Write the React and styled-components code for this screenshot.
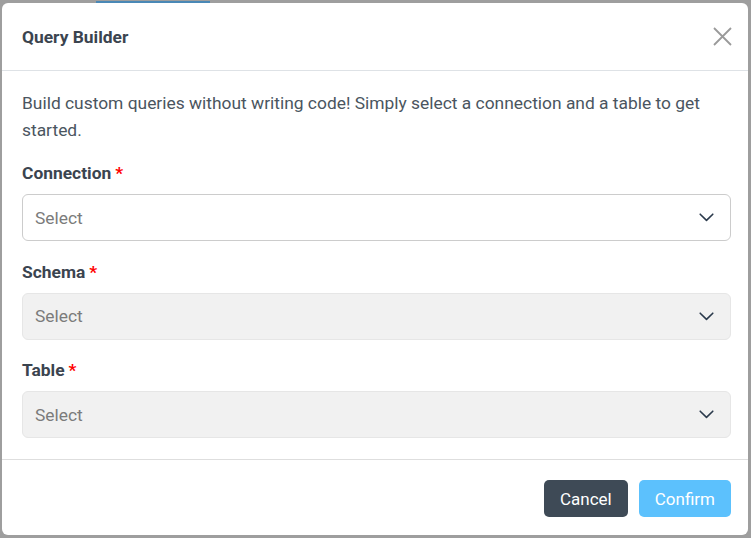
import React from "react";
import styled, { createGlobalStyle } from "styled-components";

const Global = createGlobalStyle`
  html, body { margin: 0; padding: 0; background: #9e9e9e; }
  body { font-family: Roboto, "Liberation Sans", sans-serif; }
  * { box-sizing: border-box; }
`;

const Backdrop = styled.div`
  width: 751px;
  height: 538px;
  padding-top: 1px;
  overflow: hidden;
`;

const Strip = styled.div`
  margin-left: 96px;
  width: 114px;
  height: 2px;
  background: #4a88b6;
`;

const Modal = styled.div`
  margin-left: 2px;
  width: 746px;
  height: 532px;
  background: #fff;
  border-radius: 6px;
  display: flex;
  flex-direction: column;
`;

const Header = styled.div`
  height: 68px;
  border-bottom: 1px solid #dee2e6;
  display: flex;
  align-items: center;
  justify-content: space-between;
  padding: 0 16px 0 20px;
`;

const Title = styled.h2`
  margin: 0;
  font-size: 17.4px;
  font-weight: 700;
  color: #3b444f;
`;

const Close = styled.button`
  border: 0;
  background: none;
  padding: 0;
  width: 19px;
  height: 19px;
  display: flex;
  cursor: pointer;
`;

const Body = styled.div`
  padding: 19px 17px 0 20px;
  flex: 1;
`;

const Desc = styled.p`
  margin: 0 0 17px;
  font-size: 17.4px;
  line-height: 27px;
  color: #4a5560;
`;

const Field = styled.div`
  margin-bottom: 18.5px;
`;

const Label = styled.label`
  display: block;
  font-size: 17.4px;
  font-weight: 700;
  line-height: 24px;
  color: #3b444f;
  margin-bottom: 9px;
`;

const Req = styled.span`
  color: #f00;
  margin-left: 4px;
`;

const Select = styled.div`
  height: 47px;
  border: 1px solid ${(p) => (p.disabled ? "#e6e6e6" : "#cccccc")};
  background: ${(p) => (p.disabled ? "#f1f1f1" : "#fff")};
  border-radius: 6px;
  display: flex;
  align-items: center;
  justify-content: space-between;
  padding: 0 16px 0 12px;
`;

const Placeholder = styled.span`
  font-size: 17.4px;
  color: #7b7b7b;
`;

const Footer = styled.div`
  border-top: 1px solid #dedede;
  height: 76px;
  display: flex;
  align-items: flex-start;
  justify-content: flex-end;
  gap: 11px;
  padding: 20px 17px 0 20px;
`;

const Button = styled.button`
  height: 37px;
  border: 0;
  border-radius: 5px;
  padding: 0 16px;
  font-family: Roboto, "Liberation Sans", sans-serif;
  font-size: 17px;
  color: #fff;
  background: ${(p) => (p.primary ? "#5cc1fd" : "#3e4a56")};
  cursor: pointer;
`;

const Chevron = () => (
  <svg width="15" height="9" viewBox="0 0 15 9" fill="none">
    <path d="M1.2 1.2L7.5 7.4l6.3-6.2" stroke="#2b3a4c" strokeWidth="1.6" strokeLinecap="round" strokeLinejoin="round" />
  </svg>
);

const fields = [
  { label: "Connection", disabled: false },
  { label: "Schema", disabled: true },
  { label: "Table", disabled: true },
];

export default function App() {
  return (
    <>
      <Global />
      <Backdrop>
        <Strip />
        <Modal>
          <Header>
            <Title>Query Builder</Title>
            <Close aria-label="Close">
              <svg width="19" height="19" viewBox="0 0 19 19">
                <path d="M1 1L18 18M18 1L1 18" stroke="#9a9a9a" strokeWidth="1.8" />
              </svg>
            </Close>
          </Header>
          <Body>
            <Desc>
              Build custom queries without writing code! Simply select a connection and a table to get started.
            </Desc>
            {fields.map((f) => (
              <Field key={f.label}>
                <Label>
                  {f.label}
                  <Req>*</Req>
                </Label>
                <Select disabled={f.disabled}>
                  <Placeholder>Select</Placeholder>
                  <Chevron />
                </Select>
              </Field>
            ))}
          </Body>
          <Footer>
            <Button>Cancel</Button>
            <Button primary>Confirm</Button>
          </Footer>
        </Modal>
      </Backdrop>
    </>
  );
}
